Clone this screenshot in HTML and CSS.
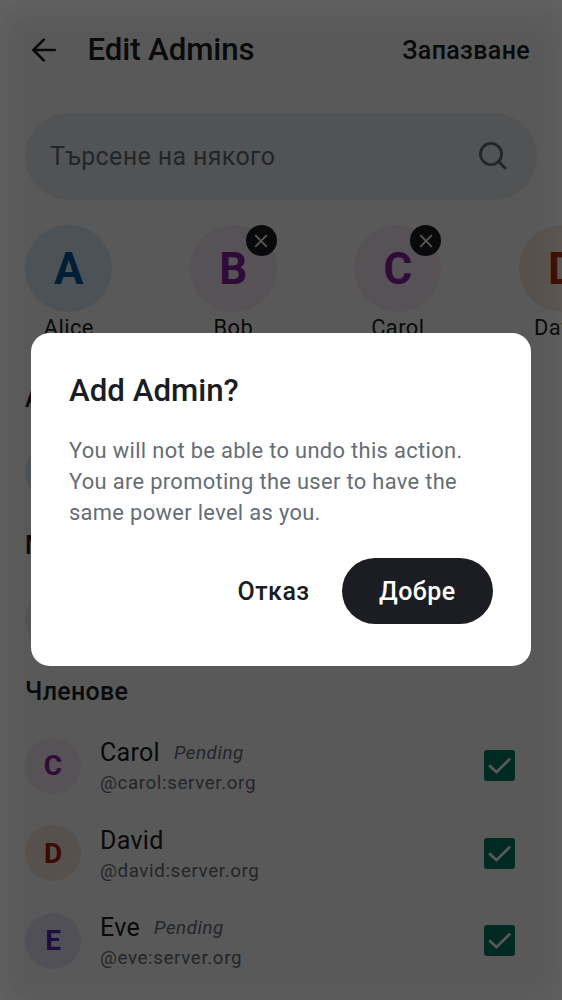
FILE: index.html
```html
<!DOCTYPE html>
<html lang="bg">
<head>
<meta charset="utf-8">
<title>Edit Admins</title>
<link rel="stylesheet" href="styles.css">
</head>
<body>
<svg class="defs" aria-hidden="true">
  <symbol id="close" viewBox="0 0 14 14"><path d="M1.2 1.2 12.8 12.8M12.8 1.2 1.2 12.8"/></symbol>
  <symbol id="tick" viewBox="0 0 31 31"><path d="M5.2 15.2 12.4 22.2 26.2 8.6"/></symbol>
</svg>
<div class="screen">
  <header class="bar">
    <svg class="back" viewBox="0 0 24 24"><path d="M11.8 1.6 1.4 12 11.8 22.4M1.8 12H22.8"/></svg>
    <h1 class="title">Edit Admins</h1>
    <button class="save">Запазване</button>
  </header>
  <div class="search">
    <span class="placeholder">Търсене на някого</span>
    <svg class="glass" viewBox="0 0 28 28"><circle cx="12" cy="12" r="10.6"/><path d="M19.7 19.7 26 26"/></svg>
  </div>
  <div class="chosen">
    <div class="person"><div class="avatar large blue">A</div><span class="label">Alice</span></div>
    <div class="person"><div class="avatar large purple">B</div><span class="label">Bob</span><span class="remove"><svg><use href="#close"/></svg></span></div>
    <div class="person"><div class="avatar large purple">C</div><span class="label">Carol</span><span class="remove"><svg><use href="#close"/></svg></span></div>
    <div class="person"><div class="avatar large orange">D</div><span class="label">David</span></div>
  </div>
  <h2 class="section">Администратори</h2>
  <div class="row"><div class="avatar blue">A</div></div>
  <h2 class="section">Модератори</h2>
  <div class="row"><div class="avatar purple">B</div></div>
  <h2 class="section">Членове</h2>
  <div class="row">
    <div class="avatar purple">C</div>
    <div class="info"><div class="name">Carol<em class="pending">Pending</em></div><div class="id">@carol:server.org</div></div>
    <svg class="check"><use href="#tick"/></svg>
  </div>
  <div class="row">
    <div class="avatar orange">D</div>
    <div class="info"><div class="name">David</div><div class="id">@david:server.org</div></div>
    <svg class="check"><use href="#tick"/></svg>
  </div>
  <div class="row">
    <div class="avatar violet">E</div>
    <div class="info"><div class="name">Eve<em class="pending">Pending</em></div><div class="id">@eve:server.org</div></div>
    <svg class="check"><use href="#tick"/></svg>
  </div>
</div>
<div class="scrim">
  <div class="dialog">
    <h2 class="question">Add Admin?</h2>
    <p class="message">You will not be able to undo this action. You are promoting the user to have the same power level as you.</p>
    <div class="actions">
      <button class="cancel">Отказ</button>
      <button class="ok">Добре</button>
    </div>
  </div>
</div>
</body>
</html>
```
FILE: styles.css
```css
* { box-sizing: border-box; }
html, body { height: 100%; }
body {
  margin: 0;
  overflow: hidden;
  font-family: Roboto, "Noto Sans", sans-serif;
  color: #1b1d22;
  background: #fff;
}
h1, h2, p { margin: 0; }
h1, h2 { font-weight: 500; }
button { border: 0; background: none; padding: 0; font: inherit; color: inherit; }
svg { fill: none; stroke: currentColor; flex: none; }
.defs { display: none; }

.screen { height: 1000px; overflow: hidden; }
.bar { display: flex; align-items: center; height: 99px; padding: 0 32px 0 31.5px; }
.back { width: 24px; height: 24px; stroke-width: 2.7; stroke-linecap: round; stroke-linejoin: round; }
.title { flex: 1; margin-left: 32px; font-size: 31.25px; letter-spacing: -.1px; }
.save { padding-top: 1px; font-size: 25px; font-weight: 500; letter-spacing: .35px; }

.search {
  display: flex; align-items: center; justify-content: space-between;
  height: 87px; margin: 14px 25px 25px; padding: 0 30px 0 25px;
  border-radius: 44px; background: #ebeef2;
}
.placeholder { font-size: 25px; letter-spacing: .37px; color: #656d77; }
.glass { width: 28px; height: 28px; margin-bottom: 2px; stroke-width: 2.9; stroke-linecap: round; color: #656d77; }

.chosen { display: flex; gap: 77.5px; width: 700px; padding: 0 0 25.9px 25.3px; }
.person { position: relative; display: flex; flex-direction: column; align-items: center; width: 87px; }
.label { font-size: 21.875px; line-height: 31px; letter-spacing: .42px; }
.remove {
  position: absolute; top: 0; right: 0; display: grid; place-items: center;
  width: 31px; height: 31px; border-radius: 50%; background: #1b1d22; color: #fff;
}
.remove svg { width: 14px; height: 14px; stroke-width: 1.7; }

.avatar {
  display: grid; place-items: center; flex: none; width: 56px; height: 56px;
  border-radius: 50%; font-size: 28px; font-weight: 700;
}
.large { width: 87px; height: 87px; font-size: 43.75px; }
.blue { background: #daecf4; color: #00569b; }
.purple { background: #f5eaf7; color: #8a1fa3; }
.orange { background: #f9e8dc; color: #a82000; }
.violet { background: #e9e6f9; color: #5320bd; }

.section { height: 59.3px; padding-left: 25px; font-size: 25px; line-height: 59.4px; letter-spacing: .3px; }
.row { display: flex; align-items: center; height: 87.5px; padding: 0 47px 0 25px; }
.info { flex: 1; margin: -2px 0 0 19px; }
.name { display: flex; align-items: center; height: 37px; font-size: 25px; letter-spacing: .3px; }
.pending { margin-left: 14px; font-size: 18.75px; letter-spacing: .55px; color: #656d77; }
.id { font-size: 18.75px; line-height: 24px; letter-spacing: .625px; color: #656d77; }
.check { width: 31px; height: 31px; border-radius: 3px; background: #007a61; color: #fff; stroke-width: 2.7; }

.scrim {
  position: fixed; inset: 0; display: grid; place-items: start center; padding-top: 333px;
  background: rgba(0, 0, 0, .65);
  box-shadow: inset 0 8px 30px rgba(255, 255, 255, .06);
}
.dialog { width: 500px; height: 333px; padding: 37.5px 38px; border-radius: 18.75px; background: #fff; }
.question { font-size: 31.25px; line-height: 39px; }
.message { margin-top: 25px; font-size: 21.875px; line-height: 31.25px; letter-spacing: .34px; color: #656d77; }
.actions { display: flex; justify-content: flex-end; align-items: center; gap: 32px; margin-top: 30px; }
.cancel, .ok { height: 65.6px; font-size: 25px; font-weight: 500; letter-spacing: .45px; }
.ok { padding: 0 37.5px; border-radius: 33px; background: #1b1d22; color: #fff; }
```
